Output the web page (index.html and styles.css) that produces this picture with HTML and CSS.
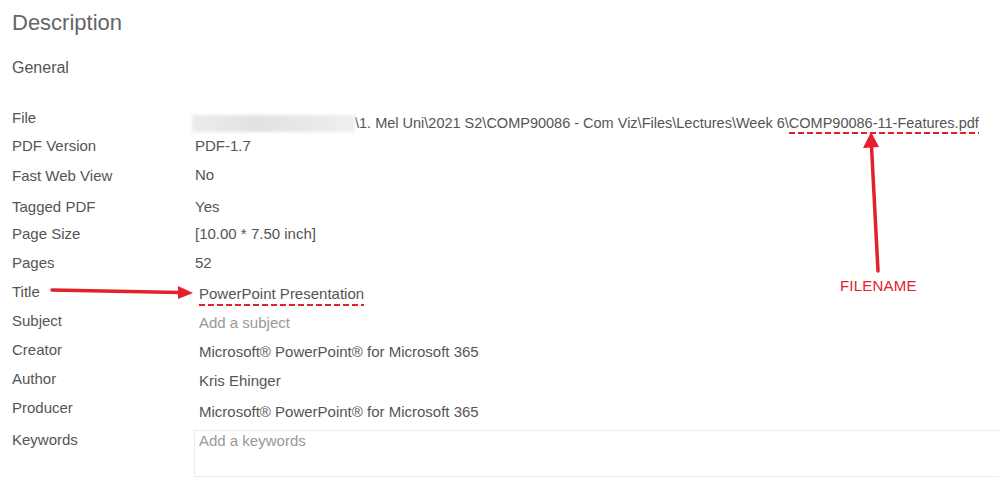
FILE: index.html
```html
<!DOCTYPE html>
<html>
<head>
<meta charset="utf-8" />
<title>Description</title>
<link rel="stylesheet" href="styles.css">
</head>
<body>
<div id="wrap">
    <h1 class="title">Description</h1>
    <h2 class="section">General</h2>
    <div class="props">
        <div class="row r-file"><div class="label">File</div><div class="value v-file"><span class="blurred"></span>\1. Mel Uni\2021 S2\COMP90086 - Com Viz\Files\Lectures\Week 6\<span class="dashed">COMP90086-11-Features.pdf</span></div></div>
        <div class="row r-ver"><div class="label">PDF Version</div><div class="value">PDF-1.7</div></div>
        <div class="row r-fast"><div class="label">Fast Web View</div><div class="value v-up">No</div></div>
        <div class="row r-tag"><div class="label">Tagged PDF</div><div class="value">Yes</div></div>
        <div class="row r-size"><div class="label">Page Size</div><div class="value">[10.00 * 7.50 inch]</div></div>
        <div class="row"><div class="label">Pages</div><div class="value">52</div></div>
        <div class="row"><div class="label">Title</div><div class="value v-low"><span class="dashed dashed-title">PowerPoint Presentation</span></div></div>
        <div class="row"><div class="label">Subject</div><div class="value v-low edit placeholder">Add a subject</div></div>
        <div class="row"><div class="label">Creator</div><div class="value v-low edit">Microsoft® PowerPoint® for Microsoft 365</div></div>
        <div class="row"><div class="label">Author</div><div class="value v-low edit">Kris Ehinger</div></div>
        <div class="row r-prod"><div class="label">Producer</div><div class="value v-lower edit">Microsoft® PowerPoint® for Microsoft 365</div></div>
        <div class="row r-keys"><div class="label">Keywords</div><div class="value keybox placeholder">Add a keywords</div></div>
    </div>

    <svg class="notes" width="999" height="479" viewBox="0 0 999 479">
        <!-- arrow to title -->
        <line x1="52" y1="290" x2="180" y2="292.5" stroke="#e3202b" stroke-width="3.5" stroke-linecap="round" />
        <polygon points="178,286 193,293 178,299" fill="#e3202b" />
        <!-- arrow to filename -->
        <line x1="878" y1="271" x2="871.5" y2="146" stroke="#e3202b" stroke-width="3.5" stroke-linecap="round" />
        <polygon points="863,148 871,132 879,147" fill="#e3202b" />
    </svg>
    <div class="tag">FILENAME</div>
</div>
</body>
</html>
```

FILE: styles.css
```css
body {margin: 0; background: #fff; font-family: "Liberation Sans", Arial, sans-serif; color: #555;}
#wrap {position: relative; width: 999px; height: 479px; overflow: hidden;}
.title {margin: 0; padding: 9px 0 0 12px; font-size: 22px; font-weight: normal; line-height: 28px; color: #666;}
.section {margin: 0; padding: 21px 0 0 12px; font-size: 16px; font-weight: normal; line-height: 20px; color: #555;}
.props {padding-top: 31px;}
.row {display: flex; height: 29px; font-size: 15px; line-height: 18px;}
.label {width: 183px; padding-left: 12px; flex: none;}
.value {flex: 1; white-space: nowrap;}
.edit {padding-left: 4px;}
.v-up {margin-top: -1px;}
.v-low {padding-top: 2px;}
.v-lower {padding-top: 4px;}
.r-file {height: 28px;}
.v-file {padding-top: 5px; margin-left: -3px; font-size: 14.5px;}
.r-ver {height: 30px;}
.r-fast {height: 31px;}
.r-tag {height: 27px;}
.r-prod {height: 32px;}
.r-keys {height: 50px;}
.placeholder {color: #999;}
.keybox {margin-top: -1px; height: 44px; border: 1px solid #ececec; border-right: none; padding: 1px 0 0 4px; margin-left: -1px; line-height: 18px;}
.blurred {display: inline-block; width: 163px; height: 17px; vertical-align: -4px; background: linear-gradient(90deg, #ececec, #e2e2e2 40%, #e8e8e8 70%, #f0f0f0); filter: blur(1.5px);}
.dashed {padding-bottom: 3px; background: repeating-linear-gradient(90deg, #e3202b 0 6px, transparent 6px 9px) left bottom / 100% 2px no-repeat;}
.dashed-title {padding-bottom: 4px; margin-left: 4px;}
.notes {position: absolute; left: 0; top: 0; pointer-events: none;}
.tag {position: absolute; left: 840px; top: 277px; font-size: 15px; line-height: 18px; color: #e3202b; letter-spacing: 0.2px;}
```
